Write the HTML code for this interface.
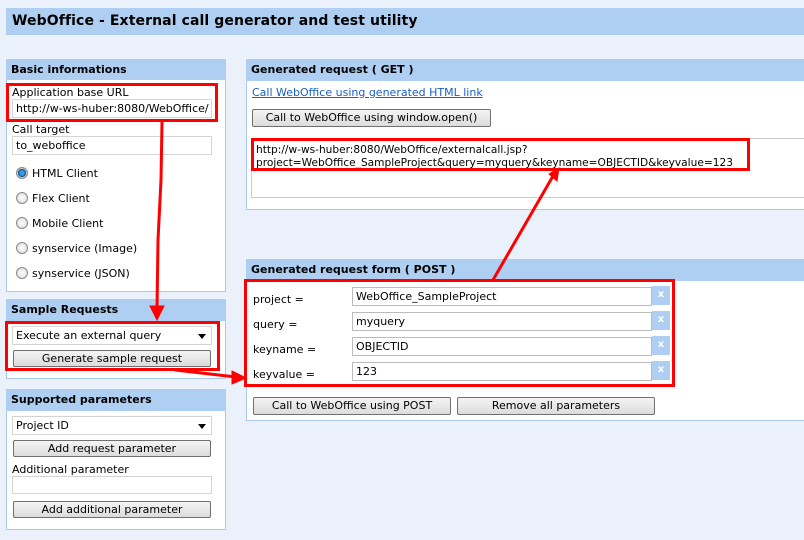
<!DOCTYPE html>
<html><head><style>
*{box-sizing:border-box;margin:0;padding:0}
body{width:804px;height:540px;background:#eaf1fa;font-family:"DejaVu Sans","Liberation Sans",sans-serif;font-size:11px;color:#000;position:relative;overflow:hidden}
.a{position:absolute}
.hdr{position:absolute;background:#afcff2;font-weight:bold;font-size:11px;padding-left:5px;line-height:21px}
.pan{position:absolute;background:#fff;border:1px solid #a9c9ee}
.inp{position:absolute;background:#fff;border:1px solid #d4d4d4;padding-left:3px;line-height:18px;white-space:nowrap;overflow:hidden}
.btn{position:absolute;border:1px solid #707070;border-radius:2px;background:linear-gradient(#f4f4f4,#dcdcdc);text-align:center;line-height:15px}
.red{position:absolute;border:3px solid #f00}
.rad{position:absolute;width:12px;height:12px;border-radius:50%;border:1px solid #8a8a8a;background:radial-gradient(#fff,#d8d8d8)}
.x{position:absolute;width:18px;height:19px;background:#afcff2;color:#fff;font-weight:bold;text-align:center;line-height:17px;font-size:10px}
.sel::after{content:"";position:absolute;right:5px;top:7px;border-left:4px solid transparent;border-right:4px solid transparent;border-top:5px solid #000}
</style></head><body>
<div class="a" style="left:6px;top:8px;width:798px;height:27px;background:#afcff2;font-weight:bold;font-size:14px;line-height:27px;padding-left:6px;letter-spacing:0.1px">WebOffice - External call generator and test utility</div>

<div class="pan" style="left:6px;top:59px;width:220px;height:233px"></div>
<div class="hdr" style="left:6px;top:59px;width:220px;height:21px">Basic informations</div>
<div class="a" style="left:12px;top:86px">Application base URL</div>
<div class="inp" style="left:12px;top:99px;width:200px;height:19px">http://w-ws-huber:8080/WebOffice/</div>
<div class="red" style="left:6px;top:83px;width:212px;height:39px"></div>
<div class="a" style="left:12px;top:123px">Call target</div>
<div class="inp" style="left:12px;top:136px;width:200px;height:19px">to_weboffice</div>
<div class="rad" style="left:16px;top:167px;background:radial-gradient(#3a9be0 30%,#0b4f8a 55%,#ccc 60%)"></div><div class="a" style="left:32px;top:167px">HTML Client</div>
<div class="rad" style="left:16px;top:192px"></div><div class="a" style="left:32px;top:192px">Flex Client</div>
<div class="rad" style="left:16px;top:217px"></div><div class="a" style="left:32px;top:217px">Mobile Client</div>
<div class="rad" style="left:16px;top:242px"></div><div class="a" style="left:32px;top:242px">synservice (Image)</div>
<div class="rad" style="left:16px;top:267px"></div><div class="a" style="left:32px;top:267px">synservice (JSON)</div>

<div class="pan" style="left:6px;top:299px;width:220px;height:80px"></div>
<div class="hdr" style="left:6px;top:299px;width:220px;height:22px;line-height:22px">Sample Requests</div>
<div class="inp sel" style="left:12px;top:326px;width:200px;height:19px">Execute an external query</div>
<div class="btn" style="left:13px;top:350px;width:198px;height:17px">Generate sample request</div>
<div class="red" style="left:5px;top:321px;width:215px;height:50px"></div>

<div class="pan" style="left:6px;top:389px;width:220px;height:141px"></div>
<div class="hdr" style="left:6px;top:389px;width:220px;height:22px;line-height:22px">Supported parameters</div>
<div class="inp sel" style="left:12px;top:416px;width:200px;height:19px">Project ID</div>
<div class="btn" style="left:13px;top:440px;width:198px;height:17px">Add request parameter</div>
<div class="a" style="left:12px;top:463px">Additional parameter</div>
<div class="inp" style="left:12px;top:476px;width:200px;height:18px"></div>
<div class="btn" style="left:13px;top:501px;width:198px;height:17px">Add additional parameter</div>

<div class="pan" style="left:246px;top:59px;width:560px;height:151px"></div>
<div class="hdr" style="left:246px;top:59px;width:560px;height:22px;line-height:22px">Generated request ( GET )</div>
<div class="a" style="left:252px;top:86px;color:#1a5fc4;text-decoration:underline">Call WebOffice using generated HTML link</div>
<div class="btn" style="left:252px;top:109px;width:239px;height:18px;line-height:16px">Call to WebOffice using window.open()</div>
<div class="inp" style="left:251px;top:138px;width:556px;height:60px;border-color:#ccc;padding:5px 0 0 4px;line-height:13px;white-space:normal;font-size:10.6px">http://w-ws-huber:8080/WebOffice/externalcall.jsp?<br>project=WebOffice_SampleProject&amp;query=myquery&amp;keyname=OBJECTID&amp;keyvalue=123</div>
<div class="red" style="left:251px;top:138px;width:499px;height:33px"></div>

<div class="pan" style="left:246px;top:259px;width:560px;height:162px"></div>
<div class="hdr" style="left:246px;top:259px;width:560px;height:22px;line-height:22px">Generated request form ( POST )</div>
<div class="a" style="left:253px;top:293px">project =</div>
<div class="a" style="left:253px;top:318px">query =</div>
<div class="a" style="left:253px;top:343px">keyname =</div>
<div class="a" style="left:253px;top:368px">keyvalue =</div>
<div class="inp" style="left:352px;top:287px;width:300px;height:19px;border-color:#bbb">WebOffice_SampleProject</div>
<div class="inp" style="left:352px;top:312px;width:300px;height:19px;border-color:#bbb">myquery</div>
<div class="inp" style="left:352px;top:337px;width:300px;height:19px;border-color:#bbb">OBJECTID</div>
<div class="inp" style="left:352px;top:362px;width:300px;height:19px;border-color:#bbb">123</div>
<div class="x" style="left:652px;top:286px">x</div>
<div class="x" style="left:652px;top:311px">x</div>
<div class="x" style="left:652px;top:336px">x</div>
<div class="x" style="left:652px;top:361px">x</div>
<div class="red" style="left:244px;top:279px;width:431px;height:108px"></div>
<div class="btn" style="left:253px;top:397px;width:198px;height:18px;line-height:16px">Call to WebOffice using POST</div>
<div class="btn" style="left:457px;top:397px;width:198px;height:18px;line-height:16px">Remove all parameters</div>

<svg class="a" style="left:0;top:0" width="804" height="540">
<g stroke="#f00" stroke-width="3" fill="#f00">
<polyline points="162,122 161,180 158,240 157,310" fill="none"/>
<polygon points="150,306 164,306 157,320" stroke-width="1"/>
<polyline points="175,370 236,377" fill="none"/>
<polygon points="232,371 246,378 232,384" stroke-width="1"/>
<line x1="493" y1="280" x2="553" y2="176"/>
<polygon points="549,174 559,168 557,181" stroke-width="1"/>
</g>
</svg>
</body></html>
